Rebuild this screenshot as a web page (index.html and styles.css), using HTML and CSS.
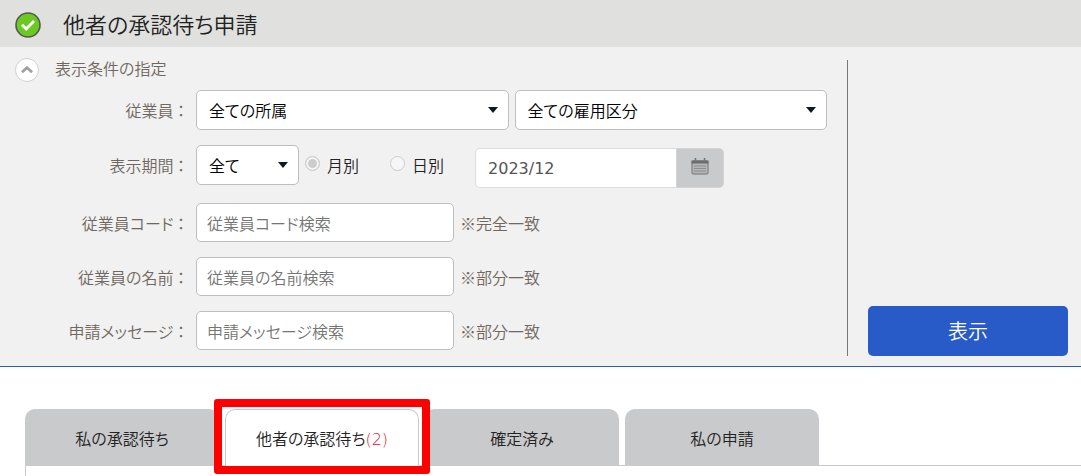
FILE: index.html
```html
<!DOCTYPE html>
<html lang="ja">
<head>
  <meta charset="UTF-8" />
  <meta name="viewport" content="width=device-width, initial-scale=1.0" />
  <title>他者の承認待ち申請</title>
  <link rel="stylesheet" href="styles.css">
</head>
<body>

  <header class="page-header">
    <svg class="status-icon" viewBox="0 0 26 26" aria-hidden="true">
      <circle cx="13" cy="13" r="12" fill="#6cc924" stroke="#55584f" stroke-width="1.6" />
      <path d="M7 12.8l4.2 4.2 7.8-8" fill="none" stroke="#fff" stroke-width="2.8" />
    </svg>
    <h1>他者の承認待ち申請</h1>
  </header>

  <form class="filter">
    <div class="filter-main">
      <div class="filter-heading">
        <button type="button" class="toggle-btn" aria-label="閉じる">
          <svg viewBox="0 0 24 24"><path d="M6.5 14.5L12 9.5l5.5 5" fill="none" stroke="#a0a0a0" stroke-width="3" /></svg>
        </button>
        <h2>表示条件の指定</h2>
      </div>

      <div class="form-row">
        <label class="row-label" for="division">従業員 ：</label>
        <div class="select-pair">
          <select id="division"><option>全ての所属</option></select>
          <select id="employment" aria-label="雇用区分"><option>全ての雇用区分</option></select>
        </div>
      </div>

      <div class="form-row period-row">
        <label class="row-label" for="period">表示期間 ：</label>
        <select id="period" class="period-select"><option>全て</option></select>
        <div class="radio-group">
          <label class="radio"><input type="radio" name="unit" checked disabled />月別</label>
          <label class="radio"><input type="radio" name="unit" disabled />日別</label>
        </div>
        <div class="date-group">
          <input type="text" value="2023/12" aria-label="年月" disabled />
          <button type="button" aria-label="カレンダー" disabled>
            <svg viewBox="0 0 18 17">
              <rect x="1" y="3" width="16" height="13" rx="2" fill="#b4b5b5" stroke="#8c8d8d" stroke-width="1.5" />
              <path d="M0.5 2.5h17v3h-17z" fill="#6c6c6c" />
              <path d="M4.5 0v4M13.5 0v4" stroke="#777" stroke-width="1.6" />
              <path d="M3 8h12M3 10.5h12M3 13h12" stroke="#8c8d8d" />
            </svg>
          </button>
        </div>
      </div>

      <div class="form-row">
        <label class="row-label" for="emp_code">従業員コード ：</label>
        <input type="text" id="emp_code" class="search-input" placeholder="従業員コード検索" />
        <span class="note">※完全一致</span>
      </div>

      <div class="form-row">
        <label class="row-label" for="emp_name">従業員の名前 ：</label>
        <input type="text" id="emp_name" class="search-input" placeholder="従業員の名前検索" />
        <span class="note">※部分一致</span>
      </div>

      <div class="form-row">
        <label class="row-label" for="message">申請メッセージ ：</label>
        <input type="text" id="message" class="search-input" placeholder="申請メッセージ検索" />
        <span class="note">※部分一致</span>
      </div>
    </div>

    <div class="filter-side">
      <button type="submit" class="submit-btn">表示</button>
    </div>
  </form>

  <div class="tab-area">
    <nav class="tabs">
      <a href="#" class="tab">私の承認待ち</a>
      <a href="#" class="tab active">他者の承認待ち<span class="count">(2)</span></a>
      <a href="#" class="tab">確定済み</a>
      <a href="#" class="tab">私の申請</a>
    </nav>
    <div class="tab-panel"></div>
  </div>

</body>
</html>
```
FILE: styles.css
```css
* {
  box-sizing: border-box;
}

body {
  margin: 0;
  background-color: #ffffff;
  color: #222222;
  font-family: "Noto Sans CJK JP", sans-serif;
  font-size: 16px;
  font-weight: 350;
  line-height: 24px;
  font-feature-settings: "palt";
}

h1, h2 {
  margin: 0;
  font-weight: 350;
}

input, select, button {
  font: inherit;
  font-feature-settings: inherit;
}

.page-header {
  display: flex;
  align-items: center;
  gap: 22px;
  height: 47px;
  padding: 2px 15px 0;
  background-color: #e0e0de;
}

.page-header h1 {
  padding-bottom: 4px;
  font-size: 22px;
  line-height: 32px;
}

.status-icon {
  width: 26px;
  height: 26px;
}

.filter {
  display: flex;
  padding: 13px 13px 10px 0;
  background-color: #f1f1f1;
  border-bottom: 1px solid #285ac8;
}

.filter-main {
  flex: 1;
  padding: 0 20px 6px 0;
}

.filter-heading {
  display: flex;
  align-items: center;
  gap: 16px;
  height: 20px;
  margin-bottom: 10px;
  padding-left: 15px;
}

.filter-heading h2 {
  padding-bottom: 4px;
  color: #706860;
  font-size: 16px;
}

.toggle-btn {
  width: 24px;
  height: 24px;
  padding: 0;
  border: 1px solid #d0d0d0;
  border-radius: 50%;
  background-color: #ffffff;
}

.toggle-btn svg {
  display: block;
}

.form-row {
  display: flex;
  align-items: center;
  margin-bottom: 15px;
}

.form-row:last-child {
  margin-bottom: 0;
}

.row-label {
  width: 196px;
  padding-right: 11px;
  color: #706860;
  text-align: right;
}

select {
  height: 40px;
  padding: 0 32px 0 12px;
  border: 1px solid #bebebe;
  border-radius: 5px;
  background: #ffffff url("data:image/svg+xml,%3Csvg xmlns='http://www.w3.org/2000/svg' viewBox='0 0 10 6'%3E%3Cpath d='M0 0h10L5 6z' fill='%23101820'/%3E%3C/svg%3E") no-repeat right 10px center / 10px 6px;
  color: #000000;
  appearance: none;
}

.select-pair {
  display: flex;
  flex: 1;
  gap: 6px;
}

.select-pair select {
  flex: 1;
  min-width: 0;
}

.period-row {
  height: 43px;
  align-items: flex-start;
}

.period-row .row-label {
  line-height: 40px;
}

.period-select {
  width: 103px;
}

.radio-group {
  display: flex;
  gap: 31px;
  padding: 0 31px 0 6px;
}

.radio {
  display: flex;
  align-items: center;
  gap: 7px;
  line-height: 40px;
}

.radio input {
  width: 15px;
  height: 15px;
  margin: 0 0 4px;
  border: 1px solid #cccccc;
  border-radius: 50%;
  background-color: #f6f6f6;
  appearance: none;
}

.radio input:checked {
  background-color: #cccccc;
  box-shadow: inset 0 0 0 2px #f6f6f6;
}

.date-group {
  display: flex;
  align-self: flex-end;
  height: 40px;
}

.date-group input {
  width: 201px;
  padding: 2px 12px 0;
  border: 1px solid #dcdcdc;
  border-right: none;
  border-radius: 5px 0 0 5px;
  background-color: #ffffff;
  color: #555555;
  font-family: "DejaVu Sans", sans-serif;
  font-weight: 400;
}

.date-group button {
  width: 48px;
  padding: 0 0 4px;
  border: 1px solid #d4d4d4;
  border-radius: 0 5px 5px 0;
  background-color: #c9cacc;
}

.date-group svg {
  display: block;
  width: 18px;
  height: 17px;
  margin: 0 auto;
}

.search-input {
  width: 258px;
  height: 39px;
  padding: 0 10px;
  border: 1px solid #bebebe;
  border-radius: 5px;
  background-color: #ffffff;
}

.search-input::placeholder {
  color: #757575;
}

.note {
  padding-left: 6px;
  color: #706860;
}

.filter-side {
  display: flex;
  align-items: flex-end;
  padding-left: 20px;
  border-left: 1px solid #777777;
}

.submit-btn {
  width: 200px;
  height: 50px;
  border: none;
  border-radius: 5px;
  background-color: #285ac8;
  color: #ffffff;
  font-size: 20px;
  cursor: pointer;
}

.tab-area {
  padding: 42px 0 0 25px;
}

.tabs {
  display: flex;
  gap: 6px;
  border-bottom: 1px solid #c9cacc;
}

.tab {
  position: relative;
  width: 194px;
  height: 57px;
  margin-bottom: -1px;
  border: 1px solid #c9cacc;
  border-bottom: none;
  border-radius: 10px 10px 0 0;
  background-color: #c9cacc;
  color: #222222;
  line-height: 56px;
  text-align: center;
  text-decoration: none;
}

.tab.active {
  z-index: 1;
  background-color: #ffffff;
}

/* red frame around the current tab */
.tab.active::after {
  content: "";
  position: absolute;
  inset: -11px -12px -8px;
  border: 8px solid #ff0000;
  border-radius: 3px;
}

.count {
  color: #dc1428;
  font-family: "DejaVu Sans", sans-serif;
}

.tab-panel {
  min-height: 10px;
  border-left: 1px solid #c9cacc;
}
```
